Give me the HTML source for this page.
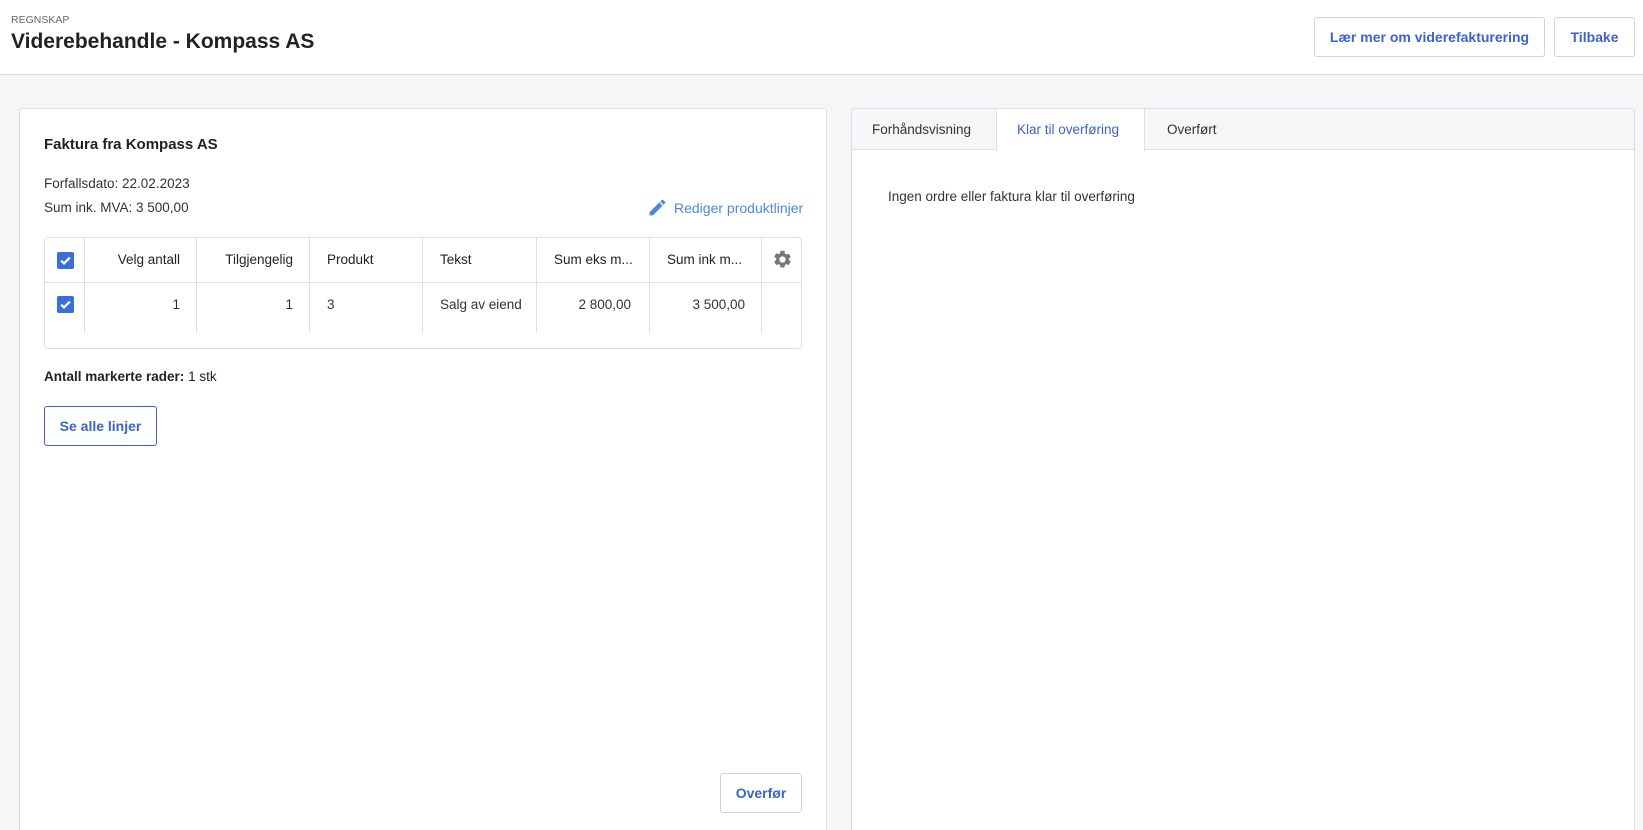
<!DOCTYPE html>
<html style="width:1643px;height:830px;overflow:hidden"><head><meta charset="utf-8"><style>
*{box-sizing:border-box;margin:0;padding:0}
body{width:1643px;height:830px;overflow:hidden;background:#f5f6f8;font-family:"Liberation Sans",Arial,sans-serif;color:#222;position:relative}
.abs{position:absolute}
.hdr{left:0;top:0;width:1643px;height:75px;background:#fff;border-bottom:1px solid #d8dadd}
.btn{position:absolute;border:1px solid #cfd3d8;border-radius:3px;background:#fff;color:#3b63c9;font-size:14px;font-weight:bold;display:flex;align-items:center;justify-content:center}
.card{background:#fff;border:1px solid #dcdfe3;border-bottom:none;border-radius:3px 3px 0 0}
.t{position:absolute;white-space:nowrap}
.tbl{left:44px;top:237px;width:758px;height:112px;border:1px solid #dcdfe3;border-radius:4px;overflow:hidden;background:#fff}
.col{position:absolute;top:0;width:1px;height:95px;background:#dcdfe3}
.cb{position:absolute;width:17px;height:17px;background:#3a6fd8;border-radius:2px}
.cb svg{position:absolute;left:2px;top:2px}
</style></head><body>
<div class="abs hdr">
 <div class="t" style="left:11px;top:14px;font-size:10.5px;color:#666">REGNSKAP</div>
 <div class="t" style="left:11px;top:30px;font-size:21px;font-weight:bold;color:#222">Viderebehandle - Kompass AS</div>
 <div class="btn" style="left:1314px;top:17px;width:231px;height:40px">Lær mer om viderefakturering</div>
 <div class="btn" style="left:1554px;top:17px;width:81px;height:40px">Tilbake</div>
</div>

<div class="abs card" style="left:19px;top:108px;width:808px;height:722px"></div>
<div class="t" style="left:44px;top:136px;font-size:15px;font-weight:bold;color:#222">Faktura fra Kompass AS</div>
<div class="t" style="left:44px;top:176px;font-size:13.5px;color:#333">Forfallsdato: 22.02.2023</div>
<div class="t" style="left:44px;top:200px;font-size:13.5px;color:#333">Sum ink. MVA: 3 500,00</div>
<svg class="abs" style="left:647px;top:197px" width="21" height="21" viewBox="0 0 24 24"><path fill="#4f86e0" d="M3 17.25V21h3.75L17.81 9.94l-3.75-3.75L3 17.25zM20.71 7.04a1 1 0 0 0 0-1.41l-2.34-2.34a1 1 0 0 0-1.41 0l-1.83 1.830 3.75 3.75 1.83-1.83z"/></svg>
<div class="t" style="left:674px;top:200px;font-size:14px;color:#4f86e0">Rediger produktlinjer</div>

<div class="abs tbl">
 <div style="position:absolute;left:0;top:44px;width:758px;height:1px;background:#dcdfe3"></div>
 <div class="col" style="left:39px"></div><div class="col" style="left:151px"></div><div class="col" style="left:264px"></div><div class="col" style="left:377px"></div><div class="col" style="left:491px"></div><div class="col" style="left:604px"></div><div class="col" style="left:716px"></div>
 <div class="cb" style="left:12px;top:14px"><svg width="13" height="13" viewBox="0 0 12 12"><path d="M2 6.2l2.6 2.5L10 3.3" stroke="#fff" stroke-width="2" fill="none"/></svg></div>
 <div class="cb" style="left:12px;top:58px"><svg width="13" height="13" viewBox="0 0 12 12"><path d="M2 6.2l2.6 2.5L10 3.3" stroke="#fff" stroke-width="2" fill="none"/></svg></div>
 <div class="t" style="right:621px;top:14px;font-size:13.5px">Velg antall</div>
 <div class="t" style="right:508px;top:14px;font-size:13.5px">Tilgjengelig</div>
 <div class="t" style="left:282px;top:14px;font-size:13.5px">Produkt</div>
 <div class="t" style="left:395px;top:14px;font-size:13.5px">Tekst</div>
 <div class="t" style="left:509px;top:14px;font-size:13.5px">Sum eks m...</div>
 <div class="t" style="left:622px;top:14px;font-size:13.5px">Sum ink m...</div>
 <svg style="position:absolute;left:727px;top:11px" width="21" height="21" viewBox="0 0 24 24"><path fill="#777" d="M19.14 12.94c.04-.3.06-.61.06-.94s-.02-.64-.07-.94l2.03-1.58a.5.5 0 0 0 .12-.61l-1.92-3.32a.5.5 0 0 0-.59-.22l-2.39.96a7 7 0 0 0-1.62-.94l-.36-2.54A.48.48 0 0 0 13.92 2h-3.84a.48.48 0 0 0-.48.41l-.36 2.54c-.59.24-1.13.57-1.62.94l-2.39-.96a.49.49 0 0 0-.59.22L2.72 8.47a.49.49 0 0 0 .12.61l2.03 1.58c-.05.3-.07.63-.07.94s.02.64.07.94l-2.03 1.58a.5.5 0 0 0-.12.61l1.92 3.32c.12.22.37.29.59.22l2.39-.96c.5.38 1.03.7 1.62.94l.36 2.54c.05.24.25.41.48.41h3.84c.24 0 .44-.17.47-.41l.36-2.54c.59-.24 1.13-.56 1.62-.94l2.39.96c.22.08.47 0 .59-.22l1.92-3.32a.48.48 0 0 0-.12-.61l-2.01-1.58zM12 15.6a3.6 3.6 0 1 1 0-7.2 3.6 3.6 0 0 1 0 7.2z"/></svg>
 <div class="t" style="right:621px;top:59px;font-size:13.5px;color:#333">1</div>
 <div class="t" style="right:508px;top:59px;font-size:13.5px;color:#333">1</div>
 <div class="t" style="left:282px;top:59px;font-size:13.5px;color:#333">3</div>
 <div class="t" style="left:395px;top:59px;width:82px;overflow:hidden;font-size:13.5px;color:#333">Salg av eiendom</div>
 <div class="t" style="right:170px;top:59px;font-size:13.5px;color:#333">2 800,00</div>
 <div class="t" style="right:56px;top:59px;font-size:13.5px;color:#333">3 500,00</div>
</div>

<div class="t" style="left:44px;top:369px;font-size:13.5px;color:#222"><b>Antall markerte rader:</b> 1 stk</div>
<div class="btn" style="left:44px;top:406px;width:113px;height:40px;border-color:#3b63c9">Se alle linjer</div>
<div class="btn" style="left:720px;top:773px;width:82px;height:40px">Overfør</div>

<div class="abs card" style="left:851px;top:108px;width:784px;height:722px;overflow:hidden">
 <div style="position:absolute;left:0;top:0;width:784px;height:41px;background:#f5f6f8;border-bottom:1px solid #dcdfe3"></div>
 <div style="position:absolute;left:144px;top:0;width:149px;height:42px;background:#fff;border-left:1px solid #dcdfe3;border-right:1px solid #dcdfe3"></div>
 <div class="t" style="left:20px;top:13px;font-size:13.5px;color:#333">Forhåndsvisning</div>
 <div class="t" style="left:165px;top:13px;font-size:13.5px;color:#3b63c9">Klar til overføring</div>
 <div class="t" style="left:315px;top:13px;font-size:13.5px;color:#333">Overført</div>
 <div class="t" style="left:36px;top:80px;font-size:13.5px;color:#333">Ingen ordre eller faktura klar til overføring</div>
</div>
</body></html>
